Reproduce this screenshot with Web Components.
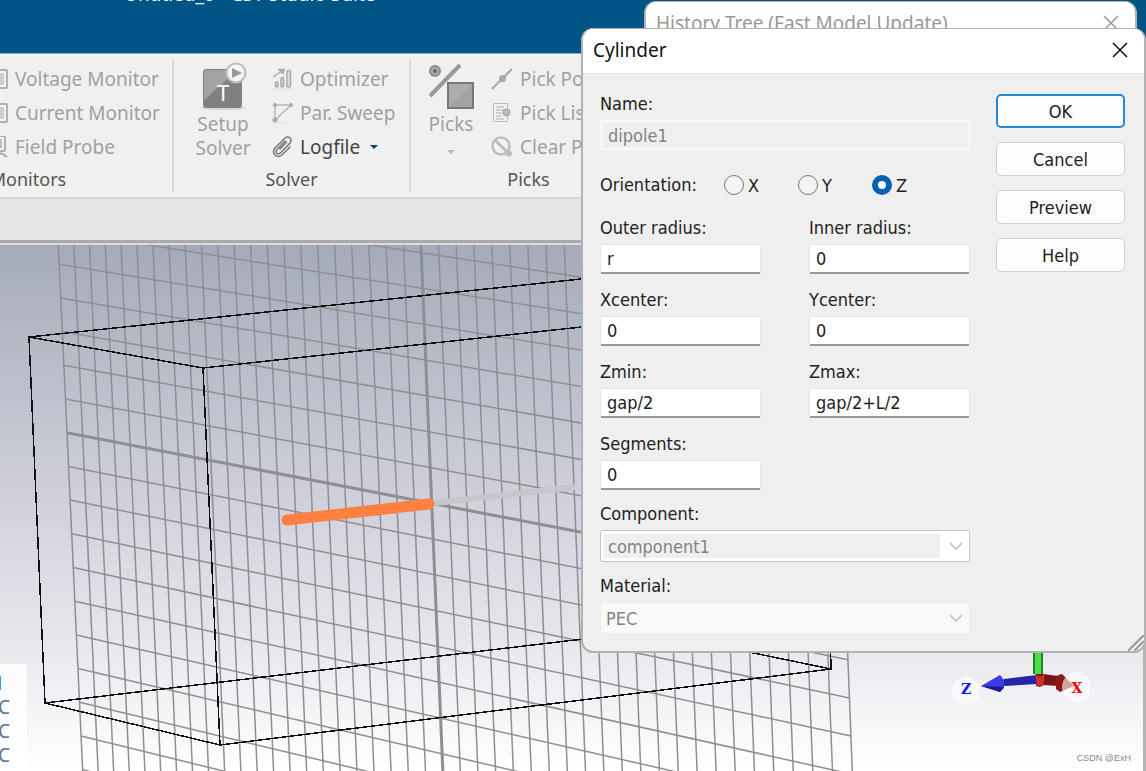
<!DOCTYPE html>
<html lang="en">
<head>
<meta charset="utf-8">
<title>CST Studio Suite</title>
<style>
  body {
    margin: 0;
    font-family: "Noto Sans", "Open Sans", sans-serif;
    font-size: 19px;
    overflow: hidden;
  }
</style>
</head>
<body>
<studio-app></studio-app>

<script>
const ICONS = {
  monitor: `<svg width="20" height="22" viewBox="0 0 20 22"><rect x="2" y="2" width="17" height="18" rx="1" fill="#f4f4f4" stroke="#b0b0b0" stroke-width="2"/><rect x="5" y="5" width="11" height="12" fill="#cdcdcd"/></svg>`,
  probe: `<svg width="20" height="22" viewBox="0 0 20 22"><rect x="1" y="0" width="16" height="15" rx="1" fill="#f4f4f4" stroke="#b0b0b0" stroke-width="2"/><rect x="4" y="3" width="10" height="9" fill="#bdbdbd"/><path d="M10 17q5 0 9 4" fill="none" stroke="#aaa" stroke-width="2"/></svg>`,
  optimizer: `<svg width="21" height="22" viewBox="0 0 21 22"><path d="M1 9L10 3M7 1.500l5 0-1 4z" fill="#aaa" stroke="#aaa" stroke-width="1.500"/><g fill="#ddd" stroke="#aaa" stroke-width="1.500"><rect x="3.500" y="14" width="2.500" height="5" rx="1"/><rect x="9" y="9.500" width="2.500" height="9.500" rx="1"/><rect x="15" y="2.500" width="3.500" height="16.500" rx="1"/></g><path d="M0 21h21" stroke="#ddd"/></svg>`,
  sweep: `<svg width="21" height="22" viewBox="0 0 21 22"><path d="M3 18V3h16L3 18" fill="none" stroke="#b5b5b5" stroke-width="1.500"/><g fill="#aaa"><circle cx="3" cy="3" r="2"/><circle cx="19" cy="3" r="2"/><circle cx="3" cy="18" r="2.500"/></g><path d="M0 21h19" stroke="#ddd"/></svg>`,
  clip: `<svg width="21" height="22" viewBox="0 0 21 22"><path d="M13 5L5 13.500q-2 3 0 4t4-1L18 7q2-3 0-5t-5 0L3 12q-3 4 0 7t7 0L18 11M14.500 6L8 13" fill="none" stroke="#777" stroke-width="1.500" stroke-linecap="round"/></svg>`,
  pickPoint: `<svg width="22" height="22" viewBox="0 0 22 22"><path d="M1 21L21 1" stroke="#aaa" stroke-width="2"/><circle cx="11.500" cy="10.500" r="3.500" fill="#a8a8a8"/></svg>`,
  pickList: `<svg width="22" height="22" viewBox="0 0 22 22"><path d="M2.500 1.500h14v18h-14z" fill="#f2f2f2" stroke="#bbb"/><path d="M5 5h8M5 8h9M5 11h6M5 14h6M5 17h8" stroke="#aaa"/><circle cx="15.500" cy="10.500" r="3.500" fill="#bbb" stroke="#a0a0a0"/></svg>`,
  clearPick: `<svg width="22" height="22" viewBox="0 0 22 22"><circle cx="10" cy="10" r="8.500" fill="#f2f2f2" stroke="#bdbdbd" stroke-width="2.500"/><path d="M4 4l12 12" stroke="#bdbdbd" stroke-width="3"/><circle cx="18" cy="17.500" r="3" fill="#bbb"/></svg>`,
  solver: `<svg width="48" height="48" viewBox="0 0 48 48"><ellipse cx="24" cy="46" rx="23" ry="2" fill="#d5d5d5"/><rect x="4" y="7" width="39" height="39" rx="3" fill="#808080"/><path d="M5 8h34L5 38z" fill="#a3a3a3"/><text x="24" y="39" fill="#fff" font-family="Noto Sans, sans-serif" font-size="22" text-anchor="middle">T</text><circle cx="37" cy="11" r="9.500" fill="#f4f4f4" stroke="#bbb" stroke-width="2"/><path d="M33 6l10 5-10 5z" fill="#999"/></svg>`,
  picks: `<svg width="48" height="48" viewBox="0 0 48 48"><path d="M3 34L33 3" stroke="#999" stroke-width="4"/><circle cx="8" cy="9" r="5" fill="#aaa" stroke="#8a8a8a" stroke-width="2"/><circle cx="8" cy="9" r="2" fill="#666"/><rect x="21" y="21" width="25" height="25" fill="#a3a3a3" stroke="#777" stroke-width="2"/><path d="M22 22h23L22 45z" fill="#acacac"/></svg>`,
  close: `<svg width="16" height="16" viewBox="0 0 16 16"><path d="M1 1l14 14M15 1L1 15" stroke="currentColor" stroke-width="1.500"/></svg>`,
  chevron: `<svg width="14" height="9" viewBox="0 0 14 9"><path d="M1 1l6 6 6-6" fill="none" stroke="#bcbcbc" stroke-width="1.500"/></svg>`
};

/* Base class: every component only has to return its css and its html */
class BaseElement extends HTMLElement {
  constructor() {
    super();
    this.attachShadow({ mode: "open" });
  }

  connectedCallback() {
    this.render();
  }

  render() {
    this.shadowRoot.innerHTML = `<style>* { box-sizing: border-box; } ${this.templateCSS()}</style>${this.templateHTML()}`;
  }
}

class SmallTool extends BaseElement {
  templateCSS() {
    return `
      :host { display: block; }
      button {
        display: flex;
        align-items: center;
        gap: 7px;
        height: 34px;
        padding: 0;
        border: none;
        background: none;
        font: inherit;
        white-space: nowrap;
        color: #444;
      }
      button:disabled { color: #a0a0a0; }
      .arrow {
        margin-left: 3px;
        border: 4px solid transparent;
        border-top-color: #0b4566;
        border-bottom: none;
      }
    `;
  }

  templateHTML() {
    return `<button ${this.hasAttribute("disabled") ? "disabled" : ""}>
      ${ICONS[this.getAttribute("icon")]}<slot></slot>
      ${this.hasAttribute("menu") ? `<span class="arrow"></span>` : ""}
    </button>`;
  }
}

class LargeTool extends BaseElement {
  templateCSS() {
    return `
      :host { display: block; width: 66px; }
      :host([menu]) { width: 48px; }
      button {
        display: flex;
        flex-direction: column;
        align-items: center;
        width: 100%;
        padding: 0;
        border: none;
        background: none;
        font: inherit;
        line-height: 24px;
        color: #a0a0a0;
      }
      svg { margin-bottom: 2px; }
      .arrow {
        margin-top: 14px;
        border: 4px solid transparent;
        border-top-color: #bbb;
        border-bottom: none;
      }
    `;
  }

  templateHTML() {
    return `<button disabled>
      ${ICONS[this.getAttribute("icon")]}<slot></slot>
      ${this.hasAttribute("menu") ? `<span class="arrow"></span>` : ""}
    </button>`;
  }
}

class RibbonGroup extends BaseElement {
  templateCSS() {
    return `
      :host {
        display: flex;
        flex-direction: column;
        flex: none;
        border-right: 2px solid #dadada;
      }
      .tools { display: flex; gap: 16px; height: 105px; padding: 3px 0 0 16px; }
      .name { text-align: center; font-size: 18px; line-height: 30px; color: #555; }
    `;
  }

  templateHTML() {
    return `<div class="tools"><slot name="large"></slot><div><slot></slot></div></div>
      <div class="name">${this.getAttribute("name")}</div>`;
  }
}

class StudioRibbon extends BaseElement {
  templateCSS() {
    return `
      :host {
        display: flex;
        overflow: hidden;
        height: 146px;
        padding: 5px 0;
        background: #f0f0f0;
        border-top: 1px solid #8fb0c4;
        border-bottom: 2px solid #d6d6d6;
      }
      ribbon-group { width: 237px; }
      /* scrolled sideways, so the first group starts outside the window */
      .first { width: 290px; margin-left: -116px; }
      .indent { margin-left: 88px; }
    `;
  }

  templateHTML() {
    return `
      <ribbon-group class="first" name="Monitors">
        <small-tool class="indent" icon="monitor" disabled>Voltage Monitor</small-tool>
        <small-tool class="indent" icon="monitor" disabled>Current Monitor</small-tool>
        <small-tool class="indent" icon="probe" disabled>Field Probe</small-tool>
      </ribbon-group>
      <ribbon-group name="Solver">
        <large-tool slot="large" icon="solver">Setup Solver</large-tool>
        <small-tool icon="optimizer" disabled>Optimizer</small-tool>
        <small-tool icon="sweep" disabled>Par. Sweep</small-tool>
        <small-tool icon="clip" menu>Logfile</small-tool>
      </ribbon-group>
      <ribbon-group name="Picks">
        <large-tool slot="large" icon="picks" menu>Picks</large-tool>
        <small-tool icon="pickPoint" disabled>Pick Points</small-tool>
        <small-tool icon="pickList" disabled>Pick Lists</small-tool>
        <small-tool icon="clearPick" disabled>Clear Picks</small-tool>
      </ribbon-group>`;
  }
}

class ModelView extends BaseElement {
  templateCSS() {
    return `
      :host {
        display: block;
        position: relative;
        overflow: hidden;
        border-right: 3px solid #b4b4b4;
        background: linear-gradient(#a5abba, #cfd0da 48%, #e8e9ee 77%, #fff);
      }
      .scene { display: block; width: 100%; height: 100%; }
      .legend {
        position: absolute;
        left: 0;
        bottom: 0;
        width: 27px;
        height: 107px;
        padding-top: 7px;
        overflow: hidden;
        background: #fffc;
        line-height: 24px;
        text-indent: -2px;
        color: #5a7494;
      }
      .legend .value { text-indent: -6px; color: #3f86d8; }
      .triad { position: absolute; right: 53px; bottom: 61px; }
      .mark {
        position: absolute;
        right: 12px;
        bottom: 6px;
        font: 9px/14px "Liberation Sans", sans-serif;
        color: #888;
      }
    `;
  }

  /**
   * Perspective working plane: the columns get wider towards the right,
   * the rows fan out between the left and the right edge.
   */
  gridLines() {
    const n = 44;
    let lines = "";
    for (let i = 0; i <= n; i++) {
      const top = (58.3 + 15.364 * i) / (1 - 0.00266 * i);
      const bottom = (82.7 + 15.156 * i) / (1 - 0.00274 * i);
      lines += `<line x1="${top}" y1="0" x2="${bottom}" y2="526" stroke-width="${i === n / 2 ? 3 : 1.5}"/>`;
    }
    for (let k = -12; k <= 10; k++) {
      const y1 = 187.7 + 33.7 * k;
      const y2 = 338.3 + 38.2 * k;
      lines += `<line x1="${58.3 + y1 * 0.0464}" y1="${y1}" x2="${831.7 + y2 * 0.0392}" y2="${y2}" stroke-width="${k === 0 ? 3 : 1.5}"/>`;
    }
    return lines;
  }

  templateHTML() {
    return `
      <svg class="scene">
        <g stroke="#8e8f90">${this.gridLines()}</g>
        <path d="M434 258L575 242" stroke="#c6c7cc" stroke-width="6"/>
        <path d="M287 275L429 259" stroke="#ff8040" stroke-width="11" stroke-linecap="round"/>
        <g fill="none" stroke="#111" stroke-width="1.500" shape-rendering="crispEdges">
          <path d="M831 424L220 500 203 123 29 92 45 458 220 500"/>
          <path d="M29 92L600 32M203 123L600 80M45 458L600 392M700 397L831 424 830 380"/>
        </g>
      </svg>
      <div class="legend"><div class="value">1</div><div>C</div><div>C</div><div>C</div></div>
      <svg class="triad" width="140" height="80" viewBox="950 630 140 80">
        <circle cx="966" cy="691" r="14" fill="#fff" opacity=".6"/>
        <path d="M1033 640h10v34h-10z" fill="#1d8a1d"/><path d="M1035 640h6v34h-6z" fill="#4be04b"/>
        <path d="M1004 679l33-4v9l-33 2z" fill="#2525a8"/>
        <path d="M981 686l19-11 4 5v8l-4 4z" fill="#3a3ae6"/><path d="M981 686l23 1-4 5z" fill="#1c1c8c"/>
        <path d="M1036 674h8l14 2v10l-14-1-4 2-4-1z" fill="#7a1515"/><path d="M1035 674l5 3 5-3-2 12h-6z" fill="#c93030"/>
        <path d="M1056 676l6-2 12 12-14 6-4-3z" fill="#8a1a1a"/>
        <circle cx="1077" cy="687" r="15" fill="#fff" opacity=".6"/>
        <g font-family="DejaVu Serif, serif" font-weight="bold" font-size="14" text-anchor="middle">
          <text x="966" y="694" fill="#11f">Z</text><text x="1077" y="693" fill="#f00">X</text>
        </g>
      </svg>
      <div class="mark">CSDN @ExH</div>`;
  }
}

class TextField extends BaseElement {
  templateCSS() {
    return `
      :host { display: block; }
      label { display: block; margin-bottom: 2px; line-height: 28px; }
      input {
        display: block;
        width: 100%;
        height: 30px;
        padding: 0 6px;
        border: 1px solid #e6e6e6;
        border-bottom: 2px solid #999;
        border-radius: 2px;
        background: #fff;
        font: inherit;
        color: #222;
      }
      input:disabled { border: 2px solid #f8f8f8; background: #efefef; color: #838383; }
    `;
  }

  templateHTML() {
    return `<label for="field">${this.getAttribute("label")}</label>
      <input id="field" type="text" value="${this.getAttribute("value")}" ${this.hasAttribute("disabled") ? "disabled" : ""}>`;
  }
}

class SelectField extends BaseElement {
  templateCSS() {
    return `
      :host { display: block; }
      label { display: block; margin-bottom: 2px; line-height: 28px; }
      .box {
        display: flex;
        align-items: center;
        height: 32px;
        padding: 3px 6px 3px 3px;
        gap: 9px;
        border: 1px solid #ececec;
        border-radius: 2px;
        background: #f9f9f9;
      }
      select {
        flex: 1;
        height: 24px;
        padding: 0 2px;
        border: none;
        background: none;
        appearance: none;
        font: inherit;
        color: #838383;
        opacity: 1;
      }
      :host([editable]) .box { border-color: #c4c4c4; background: #fff; }
      :host([editable]) select { background: #efefef; padding: 0 4px; }
    `;
  }

  templateHTML() {
    return `<label for="field">${this.getAttribute("label")}</label>
      <div class="box"><select id="field" disabled><option>${this.getAttribute("value")}</option></select>${ICONS.chevron}</div>`;
  }
}

class AxisPicker extends BaseElement {
  templateCSS() {
    return `
      :host { display: block; }
      fieldset {
        display: flex;
        align-items: center;
        height: 44px;
        margin: 0;
        padding: 4px 0 0;
        border: none;
      }
      .caption { width: 124px; }
      label { display: flex; align-items: center; gap: 4px; width: 74px; padding-top: 2px; }
      input {
        width: 20px;
        height: 20px;
        margin: 0;
        appearance: none;
        border: 1px solid #777;
        border-radius: 50%;
        background: #f4f4f4;
      }
      input:checked { border: 6px solid #0560b6; background: #fff; }
    `;
  }

  templateHTML() {
    return `<fieldset aria-label="Orientation">
      <span class="caption">Orientation:</span>
      <label><input type="radio" name="axis">X</label>
      <label><input type="radio" name="axis">Y</label>
      <label><input type="radio" name="axis" checked>Z</label>
    </fieldset>`;
  }
}

class DialogButton extends BaseElement {
  templateCSS() {
    return `
      :host { display: block; }
      button {
        width: 100%;
        height: 34px;
        border: 1px solid #d0d0d0;
        border-radius: 5px;
        background: #fdfdfd;
        font: inherit;
        color: #222;
      }
      :host([primary]) button { border: 2px solid #2b86d6; }
    `;
  }

  templateHTML() {
    return `<button><slot></slot></button>`;
  }
}

class DialogWindow extends BaseElement {
  templateCSS() {
    return `
      :host {
        display: block;
        overflow: hidden;
        border: 2px solid #b2b2b2;
        border-top-width: 1px;
        border-radius: 12px;
        background: #efefef;
      }
      header {
        display: flex;
        align-items: center;
        justify-content: space-between;
        height: 45px;
        padding: 0 16px 2px 10px;
        border-bottom: 1px solid #e4e4e4;
        background: #fff;
        color: #111;
      }
      header button { display: flex; padding: 0; border: none; background: none; color: inherit; }
      :host([inactive]) header { color: #999; }
    `;
  }

  templateHTML() {
    return `<header><span>${this.getAttribute("heading")}</span><button aria-label="Close">${ICONS.close}</button></header>
      <slot></slot>`;
  }
}

class CylinderForm extends BaseElement {
  templateCSS() {
    return `
      :host {
        display: flex;
        gap: 26px;
        position: relative;
        padding: 16px 19px 17px 17px;
        font-family: "DejaVu Sans Condensed", "DejaVu Sans", sans-serif;
        font-size: 18px;
        color: #222;
      }
      form { display: flex; flex: 1; flex-direction: column; gap: 10px; }
      .pairs { display: grid; grid-template-columns: 1fr 1fr; gap: 12px 48px; }
      .actions { display: flex; flex-direction: column; gap: 14px; width: 129px; padding-top: 4px; }
      .grip { position: absolute; right: 0; bottom: 0; }
    `;
  }

  templateHTML() {
    return `<form>
        <text-field label="Name:" value="dipole1" disabled></text-field>
        <axis-picker></axis-picker>
        <div class="pairs">
          <text-field label="Outer radius:" value="r"></text-field>
          <text-field label="Inner radius:" value="0"></text-field>
          <text-field label="Xcenter:" value="0"></text-field>
          <text-field label="Ycenter:" value="0"></text-field>
          <text-field label="Zmin:" value="gap/2"></text-field>
          <text-field label="Zmax:" value="gap/2+L/2"></text-field>
          <text-field label="Segments:" value="0"></text-field>
        </div>
        <select-field label="Component:" value="component1" editable></select-field>
        <select-field label="Material:" value="PEC"></select-field>
      </form>
      <div class="actions">
        <dialog-button primary>OK</dialog-button>
        <dialog-button>Cancel</dialog-button>
        <dialog-button>Preview</dialog-button>
        <dialog-button>Help</dialog-button>
      </div>
      <svg class="grip" width="16" height="16"><path d="M0 16L16 0M6 16L16 6" stroke="#999" stroke-width="2"/></svg>`;
  }
}

class StudioApp extends BaseElement {
  templateCSS() {
    return `
      :host { display: flex; flex-direction: column; height: 100vh; position: relative; overflow: hidden; }
      .title { height: 53px; flex: none; overflow: hidden; background: #005587; color: #fff; }
      .title span { display: block; margin: -18px 0 0 124px; line-height: 24px; }
      studio-ribbon { flex: none; }
      .strip { flex: none; height: 44px; background: #e6e6e6; border-bottom: 3px solid #aaa; }
      .edge { flex: none; height: 2px; background: #dcdcd8; }
      model-view { flex: 1; }
      .history { position: absolute; top: 1px; right: 9px; width: 493px; height: 80px; }
      .cylinder { position: absolute; top: 28px; right: 0; width: 565px; }
    `;
  }

  templateHTML() {
    return `
      <div class="title"><span>Untitled_0 - CST Studio Suite</span></div>
      <studio-ribbon></studio-ribbon>
      <div class="strip"></div>
      <div class="edge"></div>
      <model-view></model-view>
      <dialog-window class="history" heading="History Tree (Fast Model Update)" inactive></dialog-window>
      <dialog-window class="cylinder" heading="Cylinder"><cylinder-form></cylinder-form></dialog-window>`;
  }
}

customElements.define("small-tool", SmallTool);
customElements.define("large-tool", LargeTool);
customElements.define("ribbon-group", RibbonGroup);
customElements.define("studio-ribbon", StudioRibbon);
customElements.define("model-view", ModelView);
customElements.define("text-field", TextField);
customElements.define("select-field", SelectField);
customElements.define("axis-picker", AxisPicker);
customElements.define("dialog-button", DialogButton);
customElements.define("dialog-window", DialogWindow);
customElements.define("cylinder-form", CylinderForm);
customElements.define("studio-app", StudioApp);
</script>
</body>
</html>
